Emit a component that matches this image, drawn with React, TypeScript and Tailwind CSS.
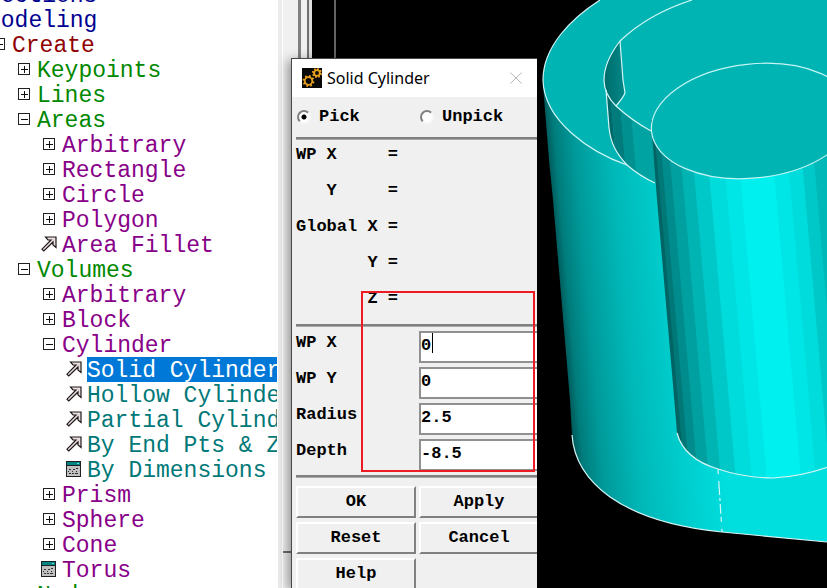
import React from "react";

type Kind = "plus" | "minus" | "pick" | "form";

interface TreeNode {
  label: string;
  kind: Kind;
  selected?: boolean;
  children?: TreeNode[];
}

const tree: TreeNode[] = [
  { label: "Sections", kind: "plus" },
  {
    label: "Modeling",
    kind: "minus",
    children: [
      {
        label: "Create",
        kind: "minus",
        children: [
          { label: "Keypoints", kind: "plus" },
          { label: "Lines", kind: "plus" },
          {
            label: "Areas",
            kind: "minus",
            children: [
              { label: "Arbitrary", kind: "plus" },
              { label: "Rectangle", kind: "plus" },
              { label: "Circle", kind: "plus" },
              { label: "Polygon", kind: "plus" },
              { label: "Area Fillet", kind: "pick" },
            ],
          },
          {
            label: "Volumes",
            kind: "minus",
            children: [
              { label: "Arbitrary", kind: "plus" },
              { label: "Block", kind: "plus" },
              {
                label: "Cylinder",
                kind: "minus",
                children: [
                  { label: "Solid Cylinder", kind: "pick", selected: true },
                  { label: "Hollow Cylinder", kind: "pick" },
                  { label: "Partial Cylinder", kind: "pick" },
                  { label: "By End Pts & Z", kind: "pick" },
                  { label: "By Dimensions", kind: "form" },
                ],
              },
              { label: "Prism", kind: "plus" },
              { label: "Sphere", kind: "plus" },
              { label: "Cone", kind: "plus" },
              { label: "Torus", kind: "form" },
            ],
          },
          { label: "Nodes", kind: "plus" },
        ],
      },
    ],
  },
];

const depthColors = [
  "text-[#000090]",
  "text-[#900000]",
  "text-[#008800]",
  "text-[#880088]",
  "text-[#007878]",
];

function NodeIcon({ kind }: { kind: Kind }) {
  if (kind === "pick") {
    return (
      <svg viewBox="0 0 16 16" className="h-4 w-4" aria-hidden="true">
        <path
          d="M4.5 1H15V11.5L12 9V6L2.8 15L1 13.2L10 4H7Z"
          fill="#e8e0e0"
          stroke="#201818"
          strokeWidth="1.2"
        />
      </svg>
    );
  }
  if (kind === "form") {
    return (
      <svg viewBox="0 0 16 16" className="h-4 w-4" shapeRendering="crispEdges" aria-hidden="true">
        <rect x="0" y="0" width="15" height="16" fill="#202020" />
        <rect x="1" y="1" width="13" height="3" fill="#008484" />
        <rect x="11" y="2" width="2" height="1" fill="#60e0e0" />
        <rect x="1" y="5" width="13" height="10" fill="#c0c0c0" />
        <path d="M3 8.5h2M7 8.5h2M10 7.5h2M3 12.5h2M6 12.5h2M9 12.5h3M2 10.5h1M6 10.5h1M10 10.5h1" stroke="#303030" />
      </svg>
    );
  }
  return (
    <svg viewBox="0 0 12 12" className="h-3 w-3" shapeRendering="crispEdges" aria-hidden="true">
      <rect x="0.5" y="0.5" width="11" height="11" fill="#fff" stroke="#202020" />
      <path d={kind === "plus" ? "M3 6.5h7M6.5 3v7" : "M3 6.5h7"} stroke="#101010" />
    </svg>
  );
}

function TreeList({ nodes, depth = 0 }: { nodes: TreeNode[]; depth?: number }) {
  return (
    <ul className={depth > 0 ? "pl-[25px]" : ""}>
      {nodes.map((node) => (
        <li key={node.label}>
          <div className="flex h-[25px] gap-1">
            <span className="flex h-[25px] w-[18px] shrink-0 items-center justify-center pb-px">
              <NodeIcon kind={node.kind} />
            </span>
            <span
              className={`h-[25px] pt-[3px] leading-[23px] whitespace-nowrap ${
                node.selected ? "bg-[#0078d7] text-white" : depthColors[depth]
              }`}
            >
              {node.label}
            </span>
          </div>
          {node.children && <TreeList nodes={node.children} depth={depth + 1} />}
        </li>
      ))}
    </ul>
  );
}

/* Flat-shaded facets of the small cylinder: [start, colour], measured along the skewed axis. */
const facets: [number, string][] = [
  [630, "#006464"],
  [643, "#007878"],
  [648, "#008c8c"],
  [656, "#00a0a0"],
  [667, "#00b4b4"],
  [679, "#00c8c8"],
  [694, "#00dcdc"],
  [710, "#00e6e6"],
  [725, "#00f0f0"],
  [759, "#00e6e6"],
  [774, "#00dcdc"],
  [788, "#00c8c8"],
  [800, "#00b8b8"],
];

function ModelView() {
  return (
    <svg
      viewBox="312 0 515 588"
      preserveAspectRatio="xMinYMin slice"
      className="h-full w-full"
      role="img"
      aria-label="Solid model"
    >
      <defs>
        <linearGradient id="side" gradientUnits="userSpaceOnUse" x1="535" y1="0" x2="685" y2="0" gradientTransform="skewX(5)">
          <stop offset="0" stopColor="#005c5c" />
          <stop offset="0.05" stopColor="#007c7c" />
          <stop offset="0.18" stopColor="#009a9a" />
          <stop offset="0.42" stopColor="#00b8b8" />
          <stop offset="0.7" stopColor="#00cccc" />
          <stop offset="1" stopColor="#00dede" />
        </linearGradient>
        <linearGradient id="notch" gradientUnits="userSpaceOnUse" x1="604" y1="0" x2="625" y2="0">
          <stop offset="0" stopColor="#006c6c" />
          <stop offset="1" stopColor="#008888" />
        </linearGradient>
        <clipPath id="post">
          <path d="M651 120L652 134L657 200L673 385L677 433C682 452 698 463 718 469C736 475 755 478 773 478C793 477 811 473 830 467V110Z" />
        </clipPath>
        <clipPath id="wall">
          <path d="M606 90C608 97 611 101 616 106C626 115 638 124 652 132L657 184C644 178 635 172 627 165C616 153 611 144 609 128Z" />
        </clipPath>
      </defs>

      <rect x="312" y="0" width="515" height="588" fill="#000" />
      <path d="M335 0V80" stroke="#c8c8c8" fill="none" />

      <path
        d="M543 85L549 160L553 200L570 400L572 435C574 465 592 484 610 497C640 518 682 528 722 532L827 542V60Z"
        fill="url(#side)"
      />
      <path
        d="M600 0C572 18 543 46 543 80C544 122 592 153 627 165L655 183L827 180V0Z"
        fill="#00b4b4"
      />
      <g clipPath="url(#wall)">
        <rect x="600" y="85" width="60" height="105" fill="#00a2a2" />
        <g transform="skewX(5)">
          <rect x="590" y="85" width="12" height="105" fill="#006a6a" />
          <rect x="602" y="85" width="9" height="105" fill="#007c7c" />
          <rect x="611" y="85" width="10" height="105" fill="#009090" />
        </g>
      </g>
      <path d="M620 41C610 54 604 67 604 80C604 91 609 99 616 106C620 101 623 97 625 93L623 80Z" fill="url(#notch)" />

      <g clipPath="url(#post)">
        <g transform="skewX(5)">
          {facets.map(([start, color]) => (
            <rect key={start} x={start} y="100" width="200" height="400" fill={color} />
          ))}
        </g>
      </g>
      <ellipse cx="753" cy="121" rx="102" ry="57" transform="rotate(-6 753 121)" fill="#00b4b4" stroke="#c4f4f4" strokeWidth="1.2" />

      <g fill="none" stroke="#d4f6f6" strokeWidth="1.2">
        <path d="M600 0C572 18 543 46 543 80C544 122 592 153 627 165" />
        <path d="M692 0C664 9 640 22 620 41C610 54 604 67 604 80C604 91 609 99 616 106C626 115 638 124 651 131" />
        <path d="M620 41L623 80L625 93C623 98 620 101 616 106" />
        <path d="M606 90L609 128C611 144 616 153 627 165C635 172 644 178 655 183" />
        <path d="M572 435C574 465 592 484 610 497C640 518 682 528 722 532L827 542" />
        <path d="M677 433C682 452 698 463 718 469C736 475 755 478 773 478C793 477 811 473 828 467" />
        <path d="M718 469L722 532" strokeDasharray="5 7 14 3 3 3 10 3" />
      </g>
    </svg>
  );
}

function Gear({ cx, cy, r }: { cx: number; cy: number; r: number }) {
  const angles = [0, 45, 90, 135, 180, 225, 270, 315];
  return (
    <g stroke="#e8a020" fill="none">
      <circle cx={cx} cy={cy} r={r} strokeWidth="1.8" />
      {angles.map((a) => (
        <path key={a} d={`M${cx} ${cy - r}v-2.2`} strokeWidth="1.8" transform={`rotate(${a + 15} ${cx} ${cy})`} />
      ))}
    </g>
  );
}

function Rule() {
  return <div className="h-[3px] border-t-2 border-b border-t-[#808080] border-b-[#a8a8a8]" />;
}

const radioClass =
  "h-[14px] w-[14px] appearance-none rounded-full border-2 border-t-[#808080] border-r-[#f8f8f8] border-b-[#f8f8f8] border-l-[#808080] bg-white checked:bg-[radial-gradient(circle,#000_0_2px,#fff_3px)]";

const fields = [
  { id: "wpx", label: "WP X", value: "0", caret: true },
  { id: "wpy", label: "WP Y", value: "0" },
  { id: "radius", label: "Radius", value: "2.5" },
  { id: "depth", label: "Depth", value: "-8.5" },
];

const readouts = ["WP X     =", "   Y     =", "Global X =", "       Y =", "       Z ="];

const leftButton =
  "h-8 border-2 border-t-white border-r-[#808080] border-b-[#808080] border-l-white bg-[#f0f0f0]";
const rightButton =
  "h-8 border-t-2 border-b-2 border-l-2 border-t-white border-b-[#808080] border-l-white bg-[#f0f0f0]";

function Dialog() {
  return (
    <section
      aria-label="Solid Cylinder"
      className="absolute top-[58px] bottom-0 left-[291px] w-[246px] overflow-hidden border-t border-l border-[#484848] bg-[#f0f0f0] font-['Liberation_Mono',monospace] text-[17px] font-bold text-black shadow-[-3px_2px_10px_rgba(0,0,0,0.4)]"
    >
      <header className="flex h-[38px] items-center bg-white pr-[15px] pb-px pl-[10px] font-['Noto_Sans','Open_Sans',sans-serif] font-normal">
        <svg viewBox="0 0 20 20" className="h-5 w-5 shrink-0" aria-hidden="true">
          <rect width="20" height="20" fill="#080808" />
          <Gear cx={6.5} cy={13} r={3.8} />
          <Gear cx={15} cy={5} r={2.8} />
        </svg>
        <h1 className="ml-[5px] flex-1 text-base leading-6 whitespace-nowrap">Solid Cylinder</h1>
        <button type="button" aria-label="Close" className="h-3 w-3">
          <svg viewBox="0 0 12 12" className="h-3 w-3" aria-hidden="true">
            <path d="M0.5 0.5L11.5 11.5M11.5 0.5L0.5 11.5" stroke="#b8b8b8" />
          </svg>
        </button>
      </header>

      <form className="pl-1" onSubmit={(e) => e.preventDefault()}>
        <div className="grid h-10 grid-cols-[120px_1fr] items-center gap-x-[3px]">
          <label className="flex items-center gap-2 pl-px">
            <input type="radio" name="mode" defaultChecked className={radioClass} />
            Pick
          </label>
          <label className="flex items-center gap-2 pl-px">
            <input type="radio" name="mode" className={radioClass} />
            Unpick
          </label>
        </div>
        <Rule />

        <div className="grid gap-2 pt-px pb-[11px]">
          {readouts.map((line) => (
            <output key={line} className="h-7 leading-7 whitespace-pre">
              {line}
            </output>
          ))}
        </div>
        <Rule />

        <div className="relative grid gap-1 pt-1 pb-1">
          {fields.map((f) => (
            <div key={f.id} className="grid grid-cols-[120px_1fr] gap-x-[3px]">
              <label htmlFor={f.id} className="leading-6">
                {f.label}
              </label>
              <div className="relative">
                <input
                  id={f.id}
                  defaultValue={f.value}
                  className="block h-8 w-full border-2 border-r-0 border-[#909090] bg-white pb-1 outline-none"
                />
                {f.caret && <span className="absolute top-[2px] left-[13px] h-5 w-px bg-black" />}
              </div>
            </div>
          ))}
          <div className="pointer-events-none absolute -top-9 right-[2px] bottom-[3px] left-[65px] border-2 border-[#ed1c24]" />
        </div>
        <Rule />

        <div className="grid grid-cols-[120px_1fr] gap-x-[3px] gap-y-1 pt-2">
          <button type="button" className={leftButton}>OK</button>
          <button type="button" className={rightButton}>Apply</button>
          <button type="button" className={leftButton}>Reset</button>
          <button type="button" className={rightButton}>Cancel</button>
          <button type="button" className={leftButton}>Help</button>
        </div>
      </form>
    </section>
  );
}

export default function App() {
  return (
    <main className="relative flex h-screen overflow-hidden bg-[#f0f0f0]">
      <nav
        aria-label="Main menu"
        className="w-[278px] shrink-0 bg-white pr-px font-['Liberation_Mono',monospace] text-[23px]"
      >
        <div className="h-full overflow-hidden">
          <div className="-mt-[18px] -ml-[35px]">
            <TreeList nodes={tree} />
          </div>
        </div>
      </nav>
      <div className="flex w-[34px] shrink-0">
        <div className="w-1 bg-[#ececec]" />
        <div className="flex w-4 flex-col border-l border-white">
          <div className="h-[553px] border-b-2 border-[#707070]" />
        </div>
        <div className="w-[3px] bg-[#808080]" />
        <div className="w-[6px] bg-[#f0f0f0]" />
        <div className="w-[2px] bg-[#707070]" />
        <div className="flex-1 bg-[#e0e0e0]" />
      </div>
      <div className="min-w-0 flex-1 bg-black">
        <ModelView />
      </div>
      <Dialog />
    </main>
  );
}
